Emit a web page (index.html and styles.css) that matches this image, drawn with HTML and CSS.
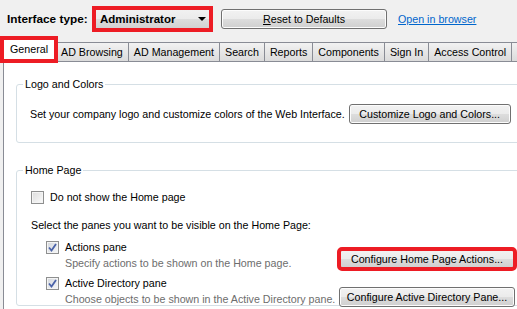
FILE: index.html
```html
<!DOCTYPE html>
<html lang="en">
<head>
    <meta charset="UTF-8">
    <title>Web Interface Settings</title>
    <link rel="stylesheet" href="styles.css">
</head>
<body>
    <!-- Toolbar -->
    <div class="toolbar">
        <span class="toolbar-label">Interface type:</span>
        <div class="combo marked">
            <span>Administrator</span>
            <span class="combo-arrow"></span>
        </div>
        <button class="btn btn-reset"><u>R</u>eset to Defaults</button>
        <a class="link" href="#">Open in browser</a>
    </div>

    <!-- Tabs -->
    <div class="tabs">
        <div class="tab active marked">General</div>
        <div class="tab">AD Browsing</div>
        <div class="tab">AD Management</div>
        <div class="tab">Search</div>
        <div class="tab">Reports</div>
        <div class="tab">Components</div>
        <div class="tab">Sign In</div>
        <div class="tab">Access Control</div>
        <div class="tab tab-more"></div>
    </div>

    <!-- Tab page -->
    <div class="panel">
        <fieldset class="group group-logo">
            <legend>Logo and Colors</legend>
            <div class="row">
                <span>Set your company logo and customize colors of the Web Interface.</span>
                <button class="btn btn-logo">Customize Logo and Colors...</button>
            </div>
        </fieldset>

        <fieldset class="group group-home">
            <legend>Home Page</legend>
            <label class="check">
                <span class="box"></span>
                Do not show the Home page
            </label>
            <p class="hint">Select the panes you want to be visible on the Home Page:</p>

            <div class="pane pane-actions">
                <div class="pane-info">
                    <label class="check">
                        <span class="box checked">
                            <svg width="9" height="9" viewBox="0 0 9 9"><path d="M1 4.5 L3.5 7.5 L8 1" fill="none" stroke="#4a62a8" stroke-width="1.8"/></svg>
                        </span>
                        Actions pane
                    </label>
                    <p class="desc">Specify actions to be shown on the Home page.</p>
                </div>
                <button class="btn btn-pane marked">Configure Home Page Actions...</button>
            </div>

            <div class="pane pane-ad">
                <div class="pane-info">
                    <label class="check">
                        <span class="box checked">
                            <svg width="9" height="9" viewBox="0 0 9 9"><path d="M1 4.5 L3.5 7.5 L8 1" fill="none" stroke="#4a62a8" stroke-width="1.8"/></svg>
                        </span>
                        Active Directory pane
                    </label>
                    <p class="desc">Choose objects to be shown in the Active Directory pane.</p>
                </div>
                <button class="btn btn-pane">Configure Active Directory Pane...</button>
            </div>
        </fieldset>
    </div>
</body>
</html>
```

FILE: styles.css
```css
/* Global */
body {
    margin: 0;
    width: 517px;
    height: 309px;
    overflow: hidden;
    background: #f0f0f0;
    font-family: "Liberation Sans", Arial, sans-serif;
    font-size: 10.7px;
    color: #000;
    white-space: nowrap;
}

p {
    margin: 0;
}

/* Red annotation frames */
.marked {
    outline: 4px solid #ed1c24;
    outline-offset: -2px;
}

/* Toolbar */
.toolbar {
    display: flex;
    align-items: center;
    height: 38px;
    padding-left: 7px;
}

.toolbar-label {
    font-weight: bold;
    font-size: 11.8px;
    width: 87px;
}

.combo {
    display: flex;
    align-items: center;
    justify-content: space-between;
    box-sizing: border-box;
    width: 117px;
    height: 22px;
    padding: 0 5px 0 6px;
    font-weight: bold;
    font-size: 11.5px;
    background: linear-gradient(to bottom, #f2f2f2 0%, #ebebeb 50%, #dddddd 51%, #cfcfcf 100%);
}

.combo-arrow {
    width: 0;
    height: 0;
    border-left: 4px solid transparent;
    border-right: 4px solid transparent;
    border-top: 4px solid #000;
}

.btn {
    font-family: inherit;
    font-size: 10.7px;
    color: #000;
    height: 20px;
    padding: 0 6px;
    border: 1px solid #707070;
    border-radius: 3px;
    background: linear-gradient(to bottom, #f2f2f2 0%, #ebebeb 50%, #dddddd 51%, #cfcfcf 100%);
    box-shadow: inset 0 0 0 1px #fcfcfc;
    white-space: nowrap;
}

.btn-reset {
    margin-left: 10px;
    width: 166px;
}

.link {
    margin-left: 11px;
    color: #0066cc;
}

/* Tabs */
.tabs {
    display: flex;
    align-items: flex-end;
    height: 23px;
    padding-left: 4px;
    border-bottom: 1px solid #898c95;
}

.tab {
    height: 18px;
    line-height: 18px;
    padding: 0 5px;
    margin-left: -1px;
    border: 1px solid #898c95;
    border-bottom: none;
    background: linear-gradient(to bottom, #f2f2f2, #dbdbdb);
}

.tab.active {
    position: relative;
    height: 22px;
    line-height: 20px;
    margin: 0 0 0 -2px;
    padding: 0 7px;
    background: #fff;
    z-index: 1;
}

.tab-more {
    width: 20px;
}

/* Tab page */
.panel {
    width: 600px;
    height: 260px;
    background: #fff;
    border-left: 1px solid #898c95;
    margin-left: 3px;
    padding: 16px 0 0 12px;
}

.group {
    margin: 0;
    border: 1px solid #d5dfe5;
    border-radius: 3px;
    padding: 0 0 0 13px;
}

.group legend {
    margin-left: -7px;
    padding: 0 2px;
}

.group-logo {
    height: 63px;
    margin-bottom: 21px;
}

.group-home {
    padding-left: 14px;
}

.group-home legend {
    margin-left: -8px;
}

.row {
    display: flex;
    align-items: center;
    gap: 4px;
    margin-top: 14px;
}

.btn-logo {
    width: 162px;
}

.check {
    display: flex;
    align-items: center;
    gap: 6px;
    height: 14px;
}

.group-home > .check {
    margin-top: 14px;
}

.box {
    display: flex;
    align-items: center;
    justify-content: center;
    width: 11px;
    height: 11px;
    border: 1px solid #8e8f8f;
    background: linear-gradient(135deg, #dcdcdc, #fbfbfb);
    box-shadow: inset 0 0 0 1px #f4f4f4;
}

.box.checked {
    background: linear-gradient(135deg, #d3d6dc, #f6f7f9);
}

.hint {
    margin-top: 15px;
    height: 14px;
}

.pane {
    display: flex;
    align-items: flex-end;
    justify-content: space-between;
    width: 469px;
    margin-left: 15px;
}

.pane-actions {
    margin-top: 7px;
}

.pane-ad {
    margin-top: 7px;
}

.desc {
    color: #6d6d6d;
    margin: 3px 0 0 19px;
}

.btn-pane {
    width: 176px;
}

.pane-actions .btn-pane {
    margin-bottom: 0;
}

.pane-ad .btn-pane {
    margin-bottom: -2px;
}
```
